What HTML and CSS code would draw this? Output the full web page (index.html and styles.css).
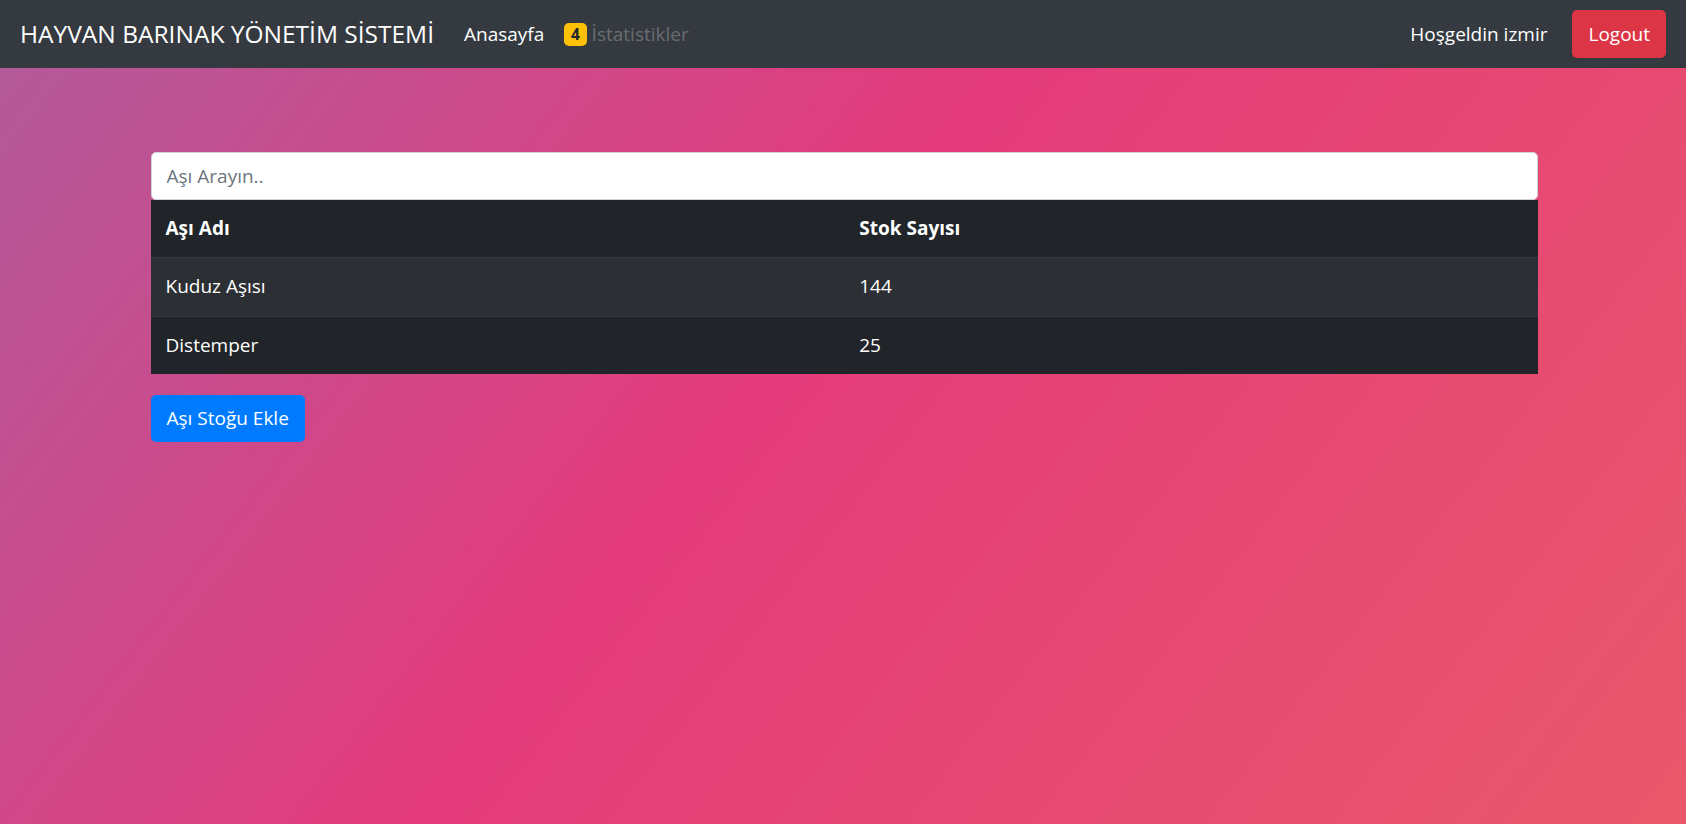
FILE: index.html
```html
<!DOCTYPE html>
<html lang="tr">
<head>
<meta charset="utf-8">
<title>Hayvan Barınak Yönetim Sistemi</title>
<link rel="stylesheet" href="styles.css">
</head>
<body>
<nav class="navbar">
  <a class="brand" href="#">HAYVAN BARINAK YÖNETİM SİSTEMİ</a>
  <ul class="nav">
    <li><a class="nav-link active" href="#">Anasayfa</a></li>
    <li><a class="nav-link muted" href="#"><span class="badge">4</span> İstatistikler</a></li>
  </ul>
  <div class="nav-right">
    <span class="welcome">Hoşgeldin izmir</span>
    <a class="btn btn-danger" href="#">Logout</a>
  </div>
</nav>
<main class="container">
  <input class="search" type="text" placeholder="Aşı Arayın..">
  <table class="table">
    <thead>
      <tr><th>Aşı Adı</th><th>Stok Sayısı</th></tr>
    </thead>
    <tbody>
      <tr class="odd"><td>Kuduz Aşısı</td><td>144</td></tr>
      <tr><td>Distemper</td><td>25</td></tr>
    </tbody>
  </table>
  <a class="btn btn-primary" href="#">Aşı Stoğu Ekle</a>
</main>
</body>
</html>
```
FILE: styles.css
```css
* { box-sizing: border-box; }
html, body { height: 100%; }
body {
  margin: 0;
  font-family: "Open Sans", "Noto Sans", sans-serif;
  font-size: 19px;
  line-height: 30px;
  color: #fff;
  background: linear-gradient(128deg, #b15b9b 0%, #e43b7b 45%, #e9586a 100%) fixed;
  min-height: 824px;
}
a { text-decoration: none; }
.navbar {
  display: flex;
  align-items: center;
  height: 67.5px;
  padding: 10px 20px;
  background: #343a40;
}
.brand {
  font-size: 24.5px;
  line-height: 37px;
  color: #fff;
  margin-right: 20px;
  white-space: nowrap;
}
.nav {
  display: flex;
  list-style: none;
  margin: 0;
  padding: 0;
}
.nav-link {
  display: block;
  padding: 10px 10px;
  color: #fff;
}
.nav-link.muted { color: rgba(255,255,255,.27); }
.badge {
  display: inline-block;
  font-size: 15.5px;
  font-weight: 700;
  line-height: 15px;
  padding: 3.75px 6.75px;
  border-radius: 5px;
  background: #ffc107;
  color: #212529;
  vertical-align: 1px;
}
.nav-right {
  margin-left: auto;
  display: flex;
  align-items: center;
  gap: 25px;
}
.welcome { color: #fff; }
.btn {
  display: inline-block;
  padding: 7.75px 15px;
  font-size: 19px;
  line-height: 30px;
  border-radius: 5px;
  color: #fff;
  border: 1px solid transparent;
}
.btn-danger { background: #dc3545; }
.btn-primary { background: #007bff; }
.container {
  width: 1425px;
  margin: 0 auto;
  padding: 84.5px 17.5px 0 20px;
}
.search {
  display: block;
  width: 100%;
  height: 47.5px;
  padding: 7.5px 15px;
  font-family: inherit;
  font-size: 19px;
  color: #495057;
  background: #fff;
  border: 1px solid #ced4da;
  border-radius: 5px;
  outline: none;
}
.search::placeholder { color: #6c757d; }
.table {
  width: 100%;
  border-collapse: collapse;
  margin-bottom: 20.5px;
  background: #212529;
  table-layout: fixed;
}
.table th, .table td {
  padding: 15px;
  line-height: 27.5px;
  text-align: left;
  vertical-align: top;
  border-top: 1px solid #32383e;
}
.table thead th { border-top: 0; border-bottom: 1px solid #32383e; font-weight: 700; }
.table tbody tr:first-child td { border-top: 0; }
.table tr.odd { background: #2c3034; }
```
